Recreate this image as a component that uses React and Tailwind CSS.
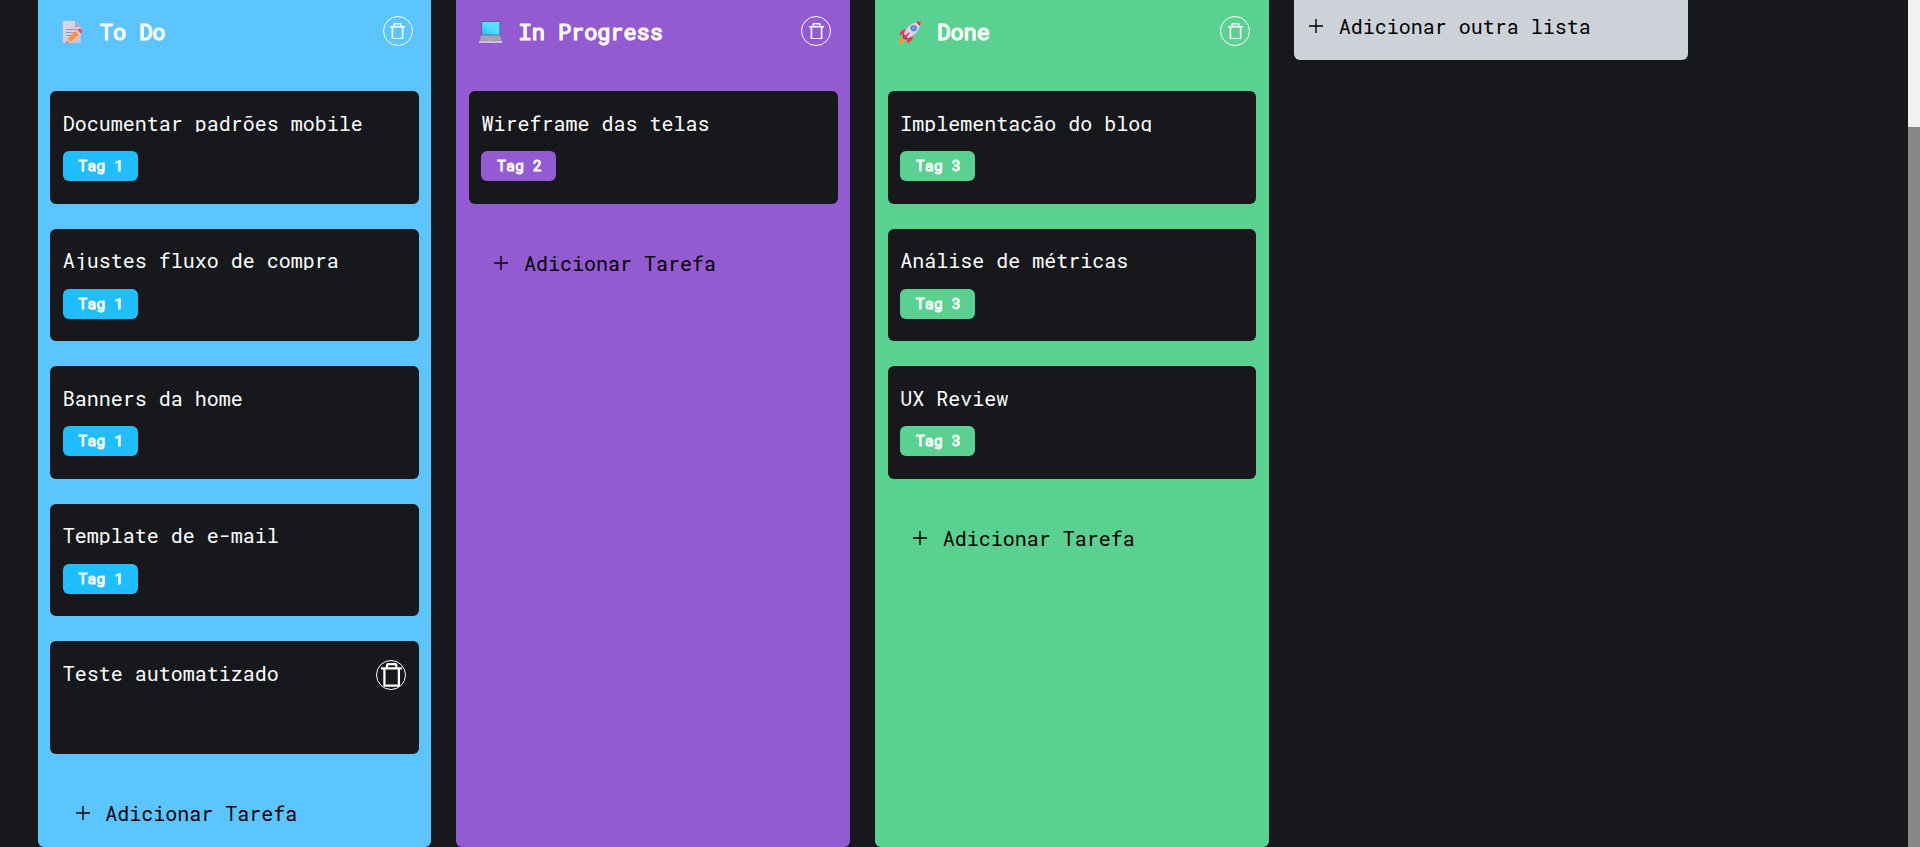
import React from "react";

function Trash({ className }) {
  return (
    <svg className={className} viewBox="0 0 15 16.7" fill="none" stroke="currentColor" strokeWidth="1.6">
      <path d="M0 3.8h15M2.4 3.8V15.9h10.200V3.8M4.200 3.8V1.500q0-.7.7-.7h5.200q.7 0 .7.7v2.300" strokeLinejoin="round" />
    </svg>
  );
}

function Plus() {
  return (
    <svg className="h-[14px] w-[14px] shrink-0" viewBox="0 0 14 14" stroke="currentColor" strokeWidth="1.4">
      <path d="M7 0v14M0 7h14" />
    </svg>
  );
}

function Memo() {
  return (
    <svg className="h-6 w-6" viewBox="-0.8 0 24 24">
      <defs>
        <linearGradient id="paper" x1="0" y1="0" x2="1" y2="1">
          <stop offset="0" stopColor="#dfdcea" />
          <stop offset="1" stopColor="#c9bfd3" />
        </linearGradient>
      </defs>
      <path d="M2 1h12l6 6v16H2z" fill="url(#paper)" />
      <path d="M14 1l6 6h-6z" fill="#b0a6c4" />
      <path d="M5 9.5h11M5 12.5h9M5 15.5h6" stroke="#9c97aa" strokeWidth="1.2" />
      <path d="M5.5 22.8l1.6-4.4 9-8 3 3.4-9.2 7.9z" fill="#ff9138" />
      <path d="M5.5 22.8l1.6-4.4 2.8 3.3z" fill="#f3b9a0" />
      <path d="M5.5 22.8l.6-1.6 1 1.2z" fill="#423043" />
      <path d="M15 11.3l1.6-1.4 3 3.4-1.6 1.4z" fill="#d9c7dd" />
      <path d="M16.6 9.9l1.4-1.1c1.8-.6 4.3 1.7 3.2 3.2l-1.5 1.3z" fill="#fb4a55" />
    </svg>
  );
}

function Laptop() {
  return (
    <svg className="h-6 w-6" viewBox="0 0 24 24">
      <defs>
        <linearGradient id="screen" x1="0" y1="1" x2="1" y2="0">
          <stop offset="0" stopColor="#35b4f5" />
          <stop offset=".5" stopColor="#4fdcff" />
          <stop offset="1" stopColor="#5be6ff" />
        </linearGradient>
      </defs>
      <rect x="2.2" y="1.2" width="19" height="14" rx=".6" fill="#51628a" />
      <rect x="3" y="2" width="17.4" height="12.6" fill="url(#screen)" />
      <path d="M1.9 15.2h19.4l1.8 6H.1z" fill="#9a93a9" />
      <path d="M3 17h17.3M2.4 19h18.4" stroke="#c9c3d3" strokeDasharray="1.4 .8" strokeWidth=".9" />
      <path d="M8.100 19.2h7v2h-7z" fill="#aaa2b8" />
      <path d="M.1 21h23v2H.1z" fill="#cbc4d6" />
    </svg>
  );
}

function Rocket() {
  return (
    <svg className="h-6 w-6" viewBox="0 0 24 24">
      <path d="M1 23c-.3-3 1-5.500 3.500-6l3 3c-.8 2.300-3.500 3.300-6.500 3z" fill="#fd9a33" />
      <path d="M9 9l-4.500.8L1 14.500l6 .5zM15 15l-.7 4.800L9.300 23.500 9 17z" fill="#f9305e" />
      <path d="M5.500 15.500C7 8 13 2.500 22.800 1.200 22 11 16 17 8.500 18.500z" fill="#dcd3e3" />
      <path d="M18 2.300c1.500-.6 3-1 4.800-1.100-.1 1.800-.4 3.400-1 4.900z" fill="#f8304e" />
      <circle cx="15.700" cy="8.200" r="3" fill="#4a72b8" />
      <circle cx="15.700" cy="8.200" r="2.100" fill="#55a8fa" />
      <path d="M4.300 16.500l1.500-2.300 4 4-2.300 1.500z" fill="#5b4772" />
      <path d="M10.800 12.200l1 1-5.500 6.300-1.800-1.800z" fill="#f9305e" />
    </svg>
  );
}

function AddRow({ label, className }) {
  return (
    <button className={`flex items-center gap-[15.5px] text-[20px] leading-[26px] text-black ${className}`}>
      <Plus />
      <span className="whitespace-pre">{label}</span>
    </button>
  );
}

function Card({ title, tag, tagColor }) {
  return (
    <article className="flex h-[112.5px] items-start justify-between rounded-md bg-[#17181c] px-[12.5px] pt-[18.8px] text-white">
      <div>
        <h3 className="h-[22.5px] overflow-hidden whitespace-pre text-[20px] leading-[26px]">{title}</h3>
        {tag && (
          <span className={`mt-[18.9px] flex h-[30px] w-[75px] items-center justify-center rounded-md pb-px pl-px text-[15px] [-webkit-text-stroke:0.9px_white] ${tagColor}`}>
            {tag}
          </span>
        )}
      </div>
      {!tag && (
        <button className="flex h-[30px] w-[30px] items-center justify-center rounded-full border border-white">
          <Trash className="h-[23.7px] w-[21.3px] shrink-0" />
        </button>
      )}
    </article>
  );
}

const columns = [
  {
    name: "To Do", Icon: Memo, bg: "bg-[#5cc4ff]", tag: "Tag 1", tagColor: "bg-[#20beff]",
    cards: ["Documentar padrões mobile", "Ajustes fluxo de compra", "Banners da home", "Template de e-mail"],
    untagged: ["Teste automatizado"],
  },
  { name: "In Progress", Icon: Laptop, bg: "bg-[#945ad1]", tag: "Tag 2", tagColor: "bg-[#945ad1]", cards: ["Wireframe das telas"], untagged: [] },
  {
    name: "Done", Icon: Rocket, bg: "bg-[#5ad190]", tag: "Tag 3", tagColor: "bg-[#5ad190]",
    cards: ["Implementação do blog", "Análise de métricas", "UX Review"], untagged: [],
  },
];

function Column({ name, Icon, bg, tag, tagColor, cards, untagged }) {
  return (
    <section className={`flex w-[393.75px] shrink-0 flex-col rounded-b-md px-[12.5px] ${bg}`}>
      <header className="flex h-[91px] items-start justify-between pr-[6.3px] pt-4 pl-[10.2px] text-white">
        <div className="flex items-start pt-1">
          <Icon />
          <h2 className="-mt-px ml-[15.4px] whitespace-pre text-[22px] leading-[26px] tracking-[-0.08px] [-webkit-text-stroke:1.2px_white]">{name}</h2>
        </div>
        <button className="flex h-[30px] w-[30px] items-center justify-center rounded-full border border-white">
          <Trash className="h-[16.7px] w-[15px]" />
        </button>
      </header>
      <div className="flex flex-col gap-[25px]">
        {cards.map((c) => <Card key={c} title={c} tag={tag} tagColor={tagColor} />)}
        {untagged.map((c) => <Card key={c} title={c} />)}
      </div>
      <AddRow label="Adicionar Tarefa" className="mt-[46.5px] pl-[25.5px]" />
    </section>
  );
}

export default function App() {
  return (
    <div className="flex h-[847px] w-full justify-between overflow-hidden bg-[#17181c] font-['Roboto_Mono','DejaVu_Sans_Mono',monospace]">
      <main className="flex gap-[25px] pl-[37.7px]">
        {columns.map((c) => <Column key={c.name} {...c} />)}
        <div className="h-[60px] w-[393.75px] shrink-0 rounded-b-md bg-[#cdd1d8] pl-[15.3px] pt-[13px]">
          <AddRow label="Adicionar outra lista" className="" />
        </div>
      </main>
      <div className="w-3 bg-[#f1f1f1] pt-[127px]">
        <div className="h-full bg-[#888888]" />
      </div>
    </div>
  );
}
